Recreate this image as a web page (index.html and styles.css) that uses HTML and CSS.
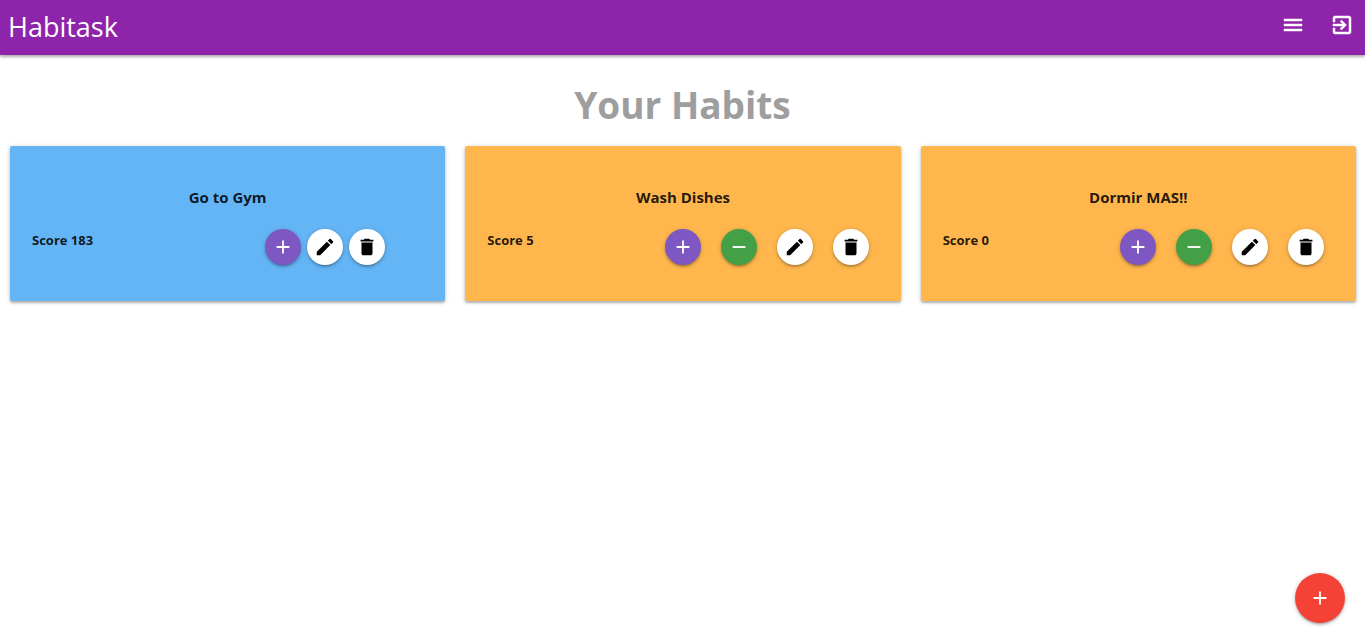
FILE: index.html
```html
<!DOCTYPE html>
<html lang="en">
<head>
<meta charset="utf-8">
<meta name="viewport" content="width=device-width, initial-scale=1">
<title>Habitask</title>
<link rel="stylesheet" href="styles.css">
</head>
<body>
<svg class="sprite" aria-hidden="true">
  <symbol id="add" viewBox="0 0 24 24"><path d="M19 13h-6v6h-2v-6H5v-2h6V5h2v6h6v2z"/></symbol>
  <symbol id="remove" viewBox="0 0 24 24"><path d="M19 13H5v-2h14v2z"/></symbol>
  <symbol id="edit" viewBox="0 0 24 24"><path d="M3 17.250V21h3.750L17.810 9.940l-3.750-3.750L3 17.250zM20.710 7.040a1 1 0 0 0 0-1.410l-2.340-2.340a1 1 0 0 0-1.410 0l-1.830 1.830 3.750 3.750 1.830-1.830z"/></symbol>
  <symbol id="delete" viewBox="0 0 24 24"><path d="M6 19c0 1.100.900 2 2 2h8c1.100 0 2-.900 2-2V7H6v12zM19 4h-3.500l-1-1h-5l-1 1H5v2h14V4z"/></symbol>
  <symbol id="menu" viewBox="0 0 24 24"><path d="M3 18h18v-2H3v2zm0-5h18v-2H3v2zm0-7v2h18V6H3z"/></symbol>
  <symbol id="exit" viewBox="0 0 24 24"><path d="M10.090 15.590L11.500 17l5-5-5-5-1.410 1.410L12.670 11H3v2h9.670l-2.580 2.590zM19 3H5a2 2 0 0 0-2 2v4h2V5h14v14H5v-4H3v4a2 2 0 0 0 2 2h14c1.100 0 2-.900 2-2V5c0-1.100-.900-2-2-2z"/></symbol>
</svg>
<header class="navbar">
  <a class="brand" href="#">Habitask</a>
  <nav class="nav-links">
    <a class="nav-link" href="#" aria-label="Menu"><svg class="icon"><use href="#menu"/></svg></a>
    <a class="nav-link" href="#" aria-label="Log out"><svg class="icon"><use href="#exit"/></svg></a>
  </nav>
</header>
<main>
  <h1 class="page-title">Your Habits</h1>
  <div class="habits">
    <article class="card card-blue">
      <h2 class="card-title">Go to Gym</h2>
      <div class="card-row">
        <p class="score">Score 183</p>
        <div class="actions">
          <button class="round plus" type="button" aria-label="Add point"><svg class="icon"><use href="#add"/></svg></button>
          <button class="round plain" type="button" aria-label="Edit"><svg class="icon"><use href="#edit"/></svg></button>
          <button class="round plain" type="button" aria-label="Delete"><svg class="icon"><use href="#delete"/></svg></button>
        </div>
      </div>
    </article>
    <article class="card card-orange">
      <h2 class="card-title">Wash Dishes</h2>
      <div class="card-row">
        <p class="score">Score 5</p>
        <div class="actions">
          <button class="round plus" type="button" aria-label="Add point"><svg class="icon"><use href="#add"/></svg></button>
          <button class="round minus" type="button" aria-label="Remove point"><svg class="icon"><use href="#remove"/></svg></button>
          <button class="round plain" type="button" aria-label="Edit"><svg class="icon"><use href="#edit"/></svg></button>
          <button class="round plain" type="button" aria-label="Delete"><svg class="icon"><use href="#delete"/></svg></button>
        </div>
      </div>
    </article>
    <article class="card card-orange">
      <h2 class="card-title">Dormir MAS!!</h2>
      <div class="card-row">
        <p class="score">Score 0</p>
        <div class="actions">
          <button class="round plus" type="button" aria-label="Add point"><svg class="icon"><use href="#add"/></svg></button>
          <button class="round minus" type="button" aria-label="Remove point"><svg class="icon"><use href="#remove"/></svg></button>
          <button class="round plain" type="button" aria-label="Edit"><svg class="icon"><use href="#edit"/></svg></button>
          <button class="round plain" type="button" aria-label="Delete"><svg class="icon"><use href="#delete"/></svg></button>
        </div>
      </div>
    </article>
  </div>
</main>
<button class="round new-habit" type="button" aria-label="New habit"><svg class="icon"><use href="#add"/></svg></button>
</body>
</html>
```
FILE: styles.css
```css
* { box-sizing: border-box; }
body {
  min-height: 100vh;
  margin: 0;
  background: #fff;
  color: rgba(0, 0, 0, 0.87);
  font-family: "Segoe UI", "Open Sans", "Noto Sans", sans-serif;
}
.sprite { position: absolute; width: 0; height: 0; }
.icon { display: block; width: 22px; height: 22px; fill: currentColor; }
.navbar {
  display: flex;
  justify-content: space-between;
  padding: 0 11px 0 8px;
  background: #8e24aa;
  color: #fff;
  box-shadow: 0 2px 2px rgba(0, 0, 0, 0.2), 0 1px 5px rgba(0, 0, 0, 0.2);
}
.brand { color: inherit; text-decoration: none; font-size: 27px; line-height: 54px; }
.nav-links { display: flex; gap: 25px; padding: 13px 0 18px; }
.nav-link { color: inherit; }
.nav-link .icon { width: 24px; height: 24px; stroke: currentColor; stroke-width: 0.5; }
.page-title {
  margin: 22px 0 13px;
  color: #9e9e9e;
  font-size: 37px;
  font-weight: 700;
  line-height: 56px;
  text-align: center;
}
.habits {
  display: grid;
  grid-template-columns: repeat(auto-fit, minmax(360px, 1fr));
  gap: 20px;
  padding: 0 9px 20px 10px;
}
.card {
  padding: 40px 32px 36px 22px;
  border-radius: 2px;
  box-shadow: 0 2px 2px rgba(0, 0, 0, 0.2), 0 1px 5px rgba(0, 0, 0, 0.2);
}
.card-blue { background: #64b5f6; }
.card-orange { background: #ffb74d; }
.card-title { margin: 0 -32px 20px -22px; font-size: 15px; font-weight: 700; line-height: 23px; text-align: center; }
.card-row { display: flex; justify-content: space-between; align-items: flex-start; }
.score { margin: 0; font-size: 13px; font-weight: 700; line-height: 22px; }
.actions { display: flex; gap: 20px; }
.card-blue .actions { gap: 6px; padding-right: 28px; }
.round {
  display: flex;
  align-items: center;
  justify-content: center;
  width: 36px;
  height: 36px;
  padding: 0;
  border: 0;
  border-radius: 50%;
  color: #fff;
  cursor: pointer;
  box-shadow: 0 2px 2px rgba(0, 0, 0, 0.14), 0 3px 1px -2px rgba(0, 0, 0, 0.12), 0 1px 5px rgba(0, 0, 0, 0.2);
}
.plus { background: #7e57c2; }
.minus { background: #43a047; }
.plain { background: #fff; color: #000; }
.new-habit {
  position: fixed;
  right: 20px;
  bottom: 15px;
  width: 50px;
  height: 50px;
  background: #f44336;
}
```
